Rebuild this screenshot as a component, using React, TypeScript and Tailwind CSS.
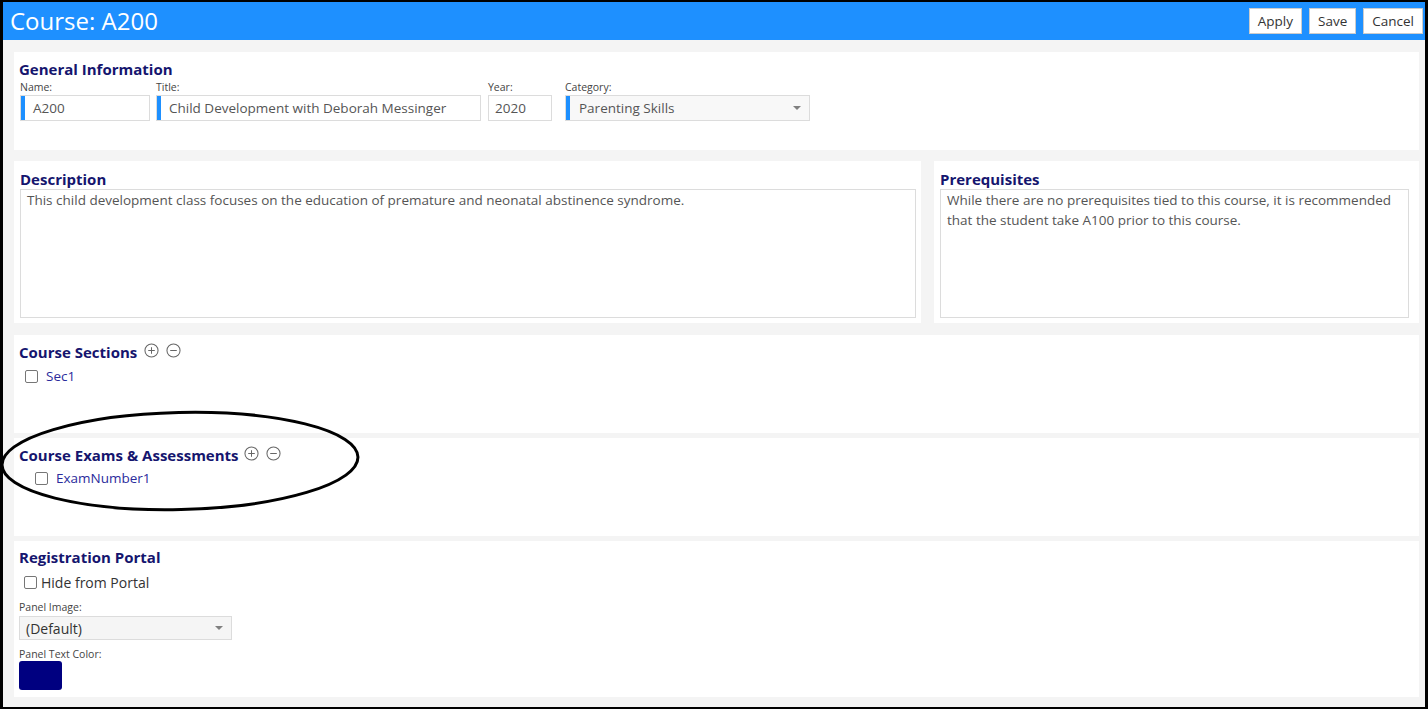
import React from "react";

const font = "font-['Open_Sans','Noto_Sans',sans-serif]";

const CircleIcon = ({ minus }: { minus?: boolean }) => (
  <svg width="15" height="15" viewBox="0 0 16 16" className="text-[#666]">
    <circle cx="8" cy="8" r="7" fill="none" stroke="currentColor" strokeWidth="1.1" />
    <path d="M4.5 8h7" stroke="currentColor" strokeWidth="1.1" />
    {!minus && <path d="M8 4.5v7" stroke="currentColor" strokeWidth="1.1" />}
  </svg>
);

const Caret = () => (
  <svg width="8" height="4" viewBox="0 0 8 4" className="mr-[8px] text-[#808080]">
    <path d="M0 0h8L4 4z" fill="currentColor" />
  </svg>
);

const Checkbox = () => (
  <span className="inline-block h-[13px] w-[13px] rounded-[2px] border border-[#767676] bg-white" />
);

const Heading = ({ children }: { children: React.ReactNode }) => (
  <h2 className="text-[15px] font-bold leading-[18px] text-[#15156e]">{children}</h2>
);

const Label = ({ children }: { children: React.ReactNode }) => (
  <div className="text-[10.5px] leading-[13px] text-[#444]">{children}</div>
);

const Field = ({
  label,
  value,
  width,
  bar,
  select,
  indent,
}: {
  label: string;
  value: string;
  width: string;
  bar?: boolean;
  select?: boolean;
  indent: string;
}) => (
  <div className={`flex flex-col ${width}`}>
    <Label>{label}</Label>
    <div
      className={`mt-[1px] flex h-[26px] items-center border border-[#dcdcdc] ${
        select ? "bg-[#f8f8f8]" : "bg-white"
      }`}
    >
      {bar && <span className="h-full w-[4px] bg-[#1e90ff]" />}
      <span className={`flex-1 text-[13.5px] text-[#555] ${indent}`}>{value}</span>
      {select && <Caret />}
    </div>
  </div>
);

export default function App() {
  return (
    <div
      className={`relative flex h-[709px] w-[1428px] flex-col border-x-[3px] border-y-2 border-black bg-[#f4f4f4] ${font}`}
    >
      {/* header */}
      <div className="flex h-[38px] items-center justify-between bg-[#1e90ff] pl-[7px] pr-[2px]">
        <h1 className="text-[24px] leading-none text-white">Course: A200</h1>
        <div className="flex gap-[7px]">
          {["Apply", "Save", "Cancel"].map((b) => (
            <button
              key={b}
              className="h-[26px] border border-[#ccc] bg-white px-[8px] text-[13.5px] text-[#333]"
            >
              {b}
            </button>
          ))}
        </div>
      </div>

      <div className="flex flex-1 flex-col pl-[11px] pr-[6px] pt-[12px]">
        {/* general information */}
        <section className="h-[98px] bg-white px-[5px] pt-[8px]">
          <Heading>General Information</Heading>
          <div className="mt-[3px] flex pl-[1px]">
            <Field label="Name:" value="A200" width="w-[130px]" bar indent="pl-[8px]" />
            <Field
              label="Title:"
              value="Child Development with Deborah Messinger"
              width="ml-[6px] w-[325px]"
              bar
              indent="pl-[8px]"
            />
            <Field label="Year:" value="2020" width="ml-[7px] w-[64px]" indent="pl-[6px]" />
            <Field
              label="Category:"
              value="Parenting Skills"
              width="ml-[13px] w-[245px]"
              bar
              select
              indent="pl-[9px]"
            />
          </div>
        </section>

        {/* description + prerequisites */}
        <div className="mt-[11px] flex h-[162px] gap-[13px]">
          <section className="flex w-[907px] flex-col bg-white pb-[5px] pl-[6px] pr-[5px] pt-[9px]">
            <Heading>Description</Heading>
            <div className="mt-[1px] flex-1 border border-[#dcdcdc] px-[6px] text-[13.5px] leading-[20px] text-[#555]">
              This child development class focuses on the education of premature and neonatal abstinence
              syndrome.
            </div>
          </section>
          <section className="flex flex-1 flex-col bg-white pb-[5px] pl-[6px] pr-[10px] pt-[9px]">
            <Heading>Prerequisites</Heading>
            <div className="mt-[1px] flex-1 border border-[#dcdcdc] px-[6px] text-[13.5px] leading-[20px] text-[#555]">
              While there are no prerequisites tied to this course, it is recommended that the student take
              A100 prior to this course.
            </div>
          </section>
        </div>

        {/* course sections */}
        <section className="mt-[12px] h-[98px] bg-white px-[5px] pt-[8px]">
          <div className="flex items-start gap-[7px]">
            <Heading>Course Sections</Heading>
            <div className="flex gap-[7px]">
              <CircleIcon />
              <CircleIcon minus />
            </div>
          </div>
          <div className="mt-[5px] flex items-center gap-[8px] pl-[6px]">
            <Checkbox />
            <span className="text-[13.5px] text-[#2b2b9c]">Sec1</span>
          </div>
        </section>

        {/* exams */}
        <section className="mt-[5px] h-[98px] bg-white px-[5px] pt-[8px]">
          <div className="flex items-start gap-[5px]">
            <Heading>Course Exams &amp; Assessments</Heading>
            <div className="flex gap-[7px]">
              <CircleIcon />
              <CircleIcon minus />
            </div>
          </div>
          <div className="mt-[4px] flex items-center gap-[8px] pl-[16px]">
            <Checkbox />
            <span className="text-[13.5px] text-[#2b2b9c]">ExamNumber1</span>
          </div>
        </section>

        {/* registration portal */}
        <section className="mt-[5px] h-[156px] bg-white px-[5px] pt-[7px]">
          <Heading>Registration Portal</Heading>
          <div className="mt-[6px] flex items-center gap-[4px] pl-[5px]">
            <Checkbox />
            <span className="text-[14px] text-[#333]">Hide from Portal</span>
          </div>
          <div className="mt-[8px]">
            <Label>Panel Image:</Label>
          </div>
          <div className="mt-[2px] flex h-[24px] w-[213px] items-center border border-[#dcdcdc] bg-[#f5f5f5]">
            <span className="flex-1 pl-[6px] text-[14px] text-[#333]">(Default)</span>
            <Caret />
          </div>
          <div className="mt-[8px]">
            <Label>Panel Text Color:</Label>
          </div>
          <div className="h-[29px] w-[43px] rounded-[3px] bg-[#000080]" />
        </section>
      </div>

      {/* hand-drawn annotation */}
      <svg
        className="pointer-events-none absolute left-[-3px] top-[-2px]"
        width="1428"
        height="709"
        viewBox="0 0 1428 709"
      >
        <ellipse
          cx="180"
          cy="461"
          rx="178"
          ry="48.5"
          fill="none"
          stroke="#000"
          strokeWidth="3"
          transform="rotate(-1.3 180 461)"
        />
      </svg>
    </div>
  );
}
